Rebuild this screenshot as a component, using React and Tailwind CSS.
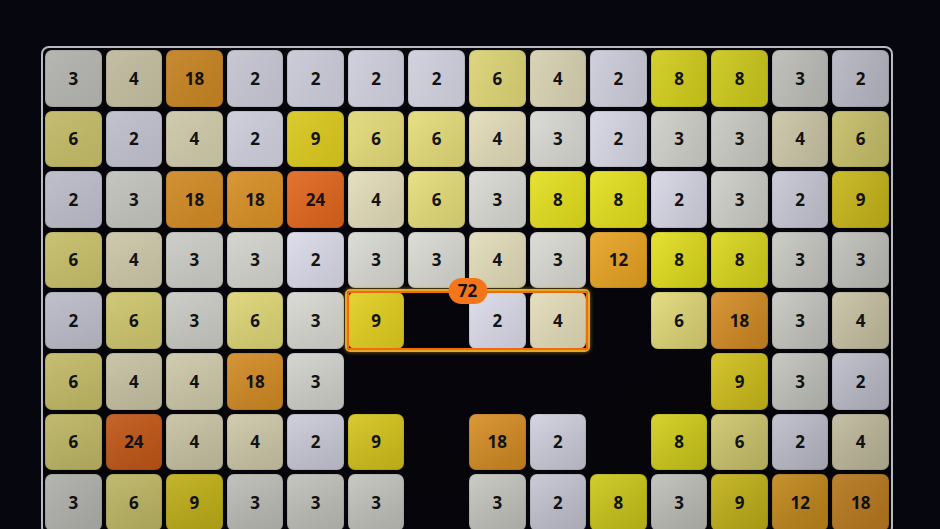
import React from "react";

// 0 = empty cell
const board = [
  [3, 4, 18, 2, 2, 2, 2, 6, 4, 2, 8, 8, 3, 2],
  [6, 2, 4, 2, 9, 6, 6, 4, 3, 2, 3, 3, 4, 6],
  [2, 3, 18, 18, 24, 4, 6, 3, 8, 8, 2, 3, 2, 9],
  [6, 4, 3, 3, 2, 3, 3, 4, 3, 12, 8, 8, 3, 3],
  [2, 6, 3, 6, 3, 9, 0, 2, 4, 0, 6, 18, 3, 4],
  [6, 4, 4, 18, 3, 0, 0, 0, 0, 0, 0, 9, 3, 2],
  [6, 24, 4, 4, 2, 9, 0, 18, 2, 0, 8, 6, 2, 4],
  [3, 6, 9, 3, 3, 3, 0, 3, 2, 8, 3, 9, 12, 18],
];

const tileColors = {
  2: "bg-[#dbdbea]",
  3: "bg-[#dadad4]",
  4: "bg-[#e3ddba]",
  6: "bg-[#e6dd7a]",
  8: "bg-[#e4e01e]",
  9: "bg-[#e2cf1e]",
  12: "bg-[#e8a322]",
  18: "bg-[#e09426]",
  24: "bg-[#e2661c]",
};

const Tile = ({ value }) => {
  if (!value) return <div className="h-[56.6px]" />;
  return (
    <div
      className={`h-[56.6px] rounded-[7px] ${tileColors[value]} bg-linear-to-br from-white/10 to-black/10 flex items-center justify-center text-[17px] font-bold text-[#141414] shadow-[inset_0_0_0_1px_rgba(0,0,0,0.08)]`}
    >
      {value}
    </div>
  );
};

export default function App() {
  return (
    <div
      className="h-screen overflow-hidden bg-[#06060f] pl-[41px] pt-[46px]"
      style={{ fontFamily: '"Open Sans", "DejaVu Sans", sans-serif' }}
    >
      <div className="w-[852px] rounded-[8px] border-2 border-[#b9b9c2] bg-[#05050b] p-[2px]">
        <div className="relative">
          <div className="grid grid-cols-14 gap-[4px] w-[844px]">
            {board.map((row, r) =>
              row.map((v, c) => <Tile key={`${r}-${c}`} value={v} />)
            )}
          </div>

          {/* lighting vignette */}
          <div className="pointer-events-none absolute inset-0 bg-[radial-gradient(ellipse_60%_75%_at_50%_40%,transparent_35%,rgba(0,0,0,0.18)_100%)]" />

          {/* current selection */}
          <div className="absolute left-[300px] top-[239px] w-[245px] h-[63px] rounded-[5px] border-[2px] border-[#e6a922] shadow-[inset_0_0_0_2px_#ef6b12,0_0_4px_rgba(230,169,34,0.6)]">
            <div className="absolute left-1/2 -translate-x-1/2 -top-[13px] h-[26px] w-[39px] rounded-full bg-[#f5761a] flex items-center justify-center text-[17px] font-bold text-[#141414]">
              72
            </div>
          </div>
        </div>
      </div>
    </div>
  );
}
